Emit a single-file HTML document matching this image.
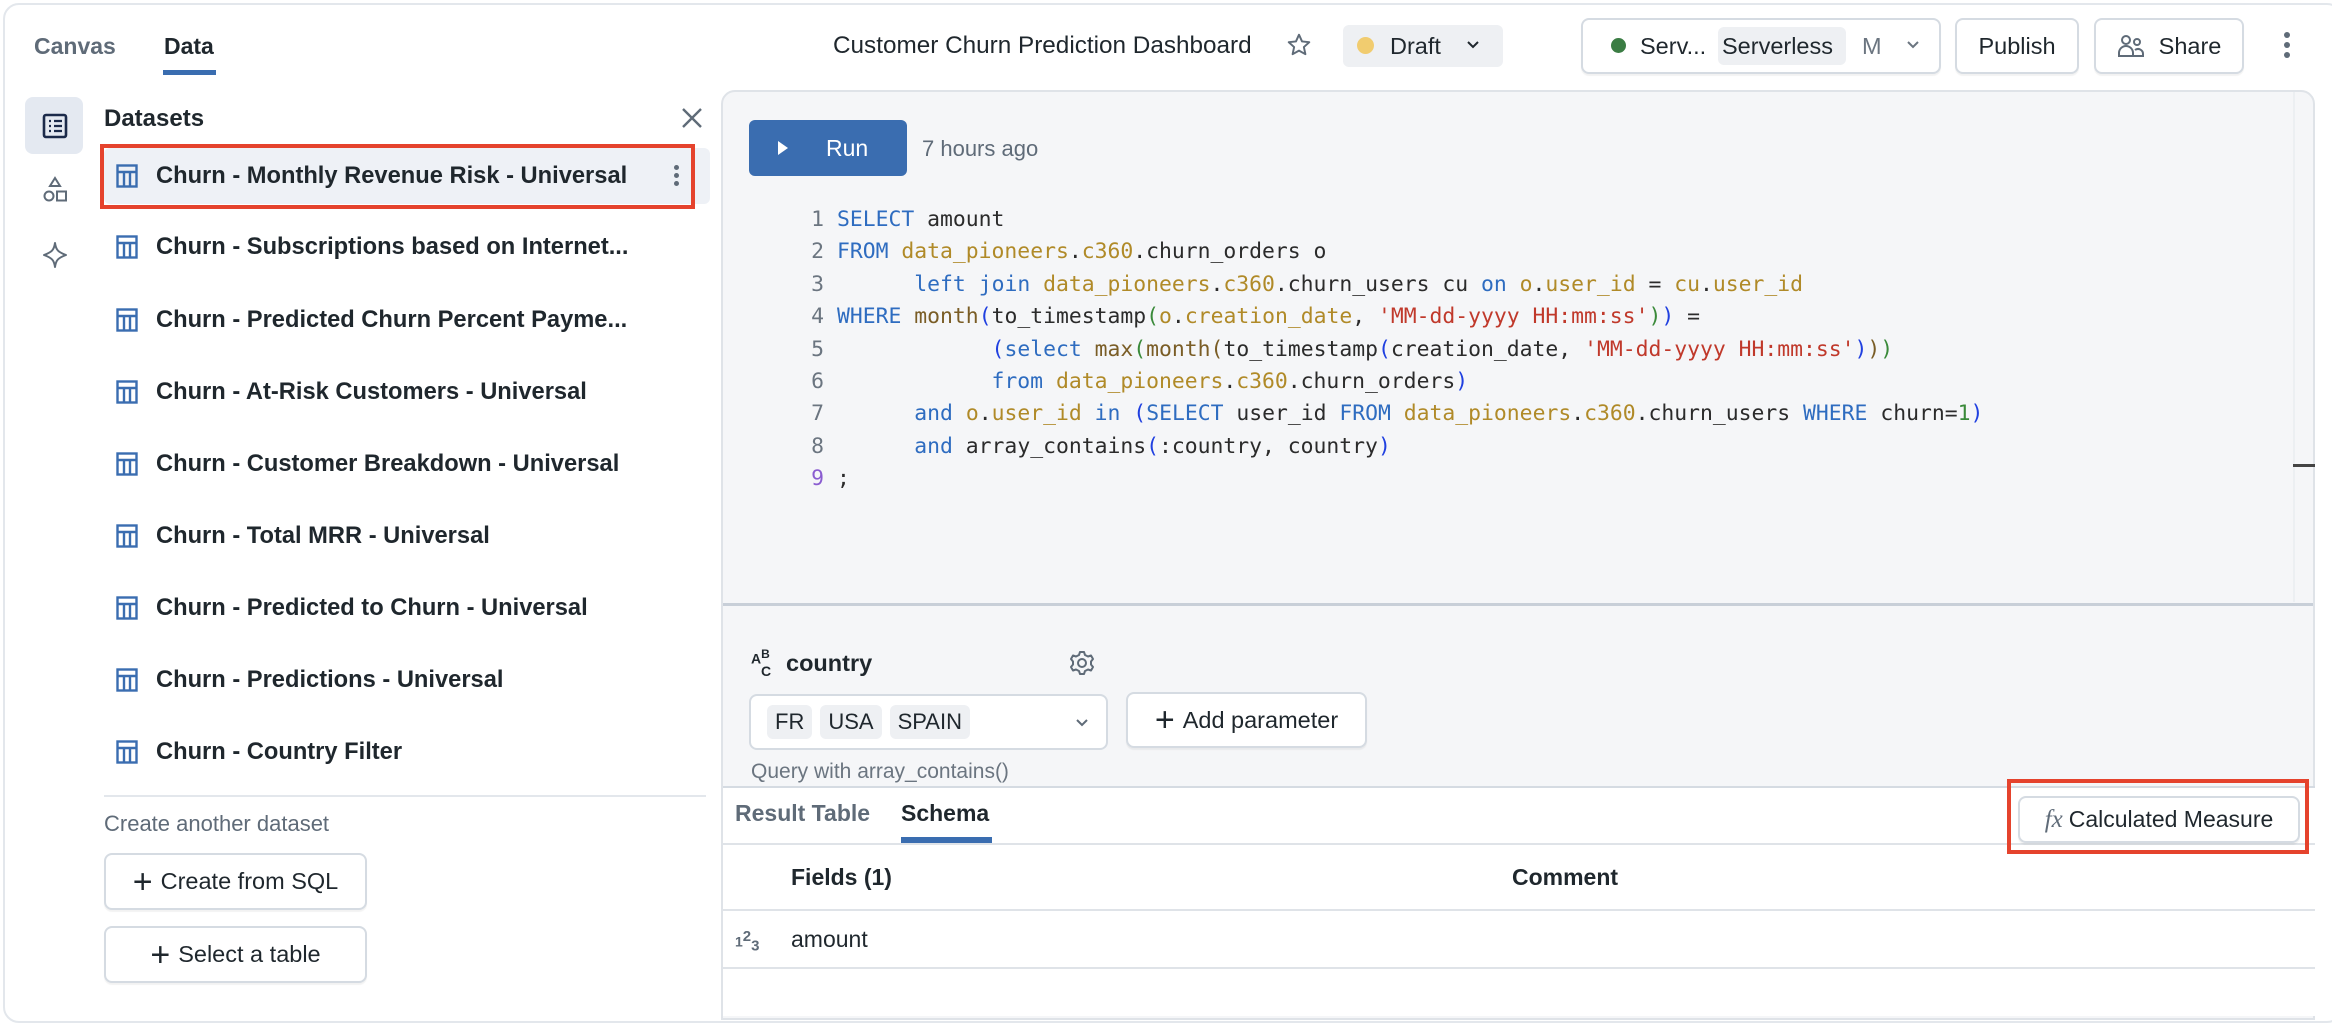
<!DOCTYPE html>
<html><head><meta charset="utf-8"><style>
*{box-sizing:border-box;margin:0;padding:0}
body{width:2332px;height:1010px;background:#fff;font-family:"Liberation Sans",sans-serif;color:#1f272d;position:relative;overflow:hidden}
.a{position:absolute}
.frame{left:3px;top:3px;width:2340px;height:1020px;border:2px solid #e3e7ec;border-radius:16px}
.btn{position:absolute;border:2px solid #d5dbe2;border-radius:8px;background:#fff;display:flex;align-items:center;justify-content:center;font-size:23.5px;color:#1f272d;box-shadow:0 2px 1px rgba(0,0,0,.05)}
.row{position:absolute;left:116px;height:56px;display:flex;align-items:center;font-size:23.7px;font-weight:bold;color:#1f272d;white-space:nowrap}
.row svg{margin-right:18px}
.code{position:absolute;left:800px;top:204px;font-family:"DejaVu Sans Mono","Liberation Mono",monospace;font-size:21.4px;line-height:32.4px;color:#2b2b2b;white-space:pre}
.ln{display:inline-block;width:24px;text-align:right;color:#6b7580;margin-right:13px}
.k{color:#2e6cc0}.i{color:#b08a28}.f{color:#7a5d26}.s{color:#c0392b}.n{color:#3a8a3a}.p{color:#2040e0}.pg{color:#3a8a3a}
.chip{background:#eef0f3;border-radius:6px;padding:4px 8px;margin-right:8px}
</style></head><body>
<div class="a frame"></div>
<!-- tabs -->
<div class="a" style="left:34px;top:33px;font-size:23px;font-weight:bold;color:#5f6b78">Canvas</div>
<div class="a" style="left:164px;top:33px;font-size:23px;font-weight:bold;color:#1f272d">Data</div>
<div class="a" style="left:163px;top:70px;width:53px;height:5px;background:#3a6db0"></div>
<!-- header -->
<div class="a" style="left:833px;top:32px;font-size:24.3px;color:#1f272d">Customer Churn Prediction Dashboard</div>
<svg class="a" style="left:1286px;top:32px" width="26" height="26" viewBox="0 0 24 24"><path d="M12 2.5l2.8 6.2 6.7.7-5 4.5 1.4 6.6L12 17.2 6.1 20.5l1.4-6.6-5-4.5 6.7-.7z" fill="none" stroke="#5f6b78" stroke-width="1.8" stroke-linejoin="round"/></svg>
<div class="a" style="left:1343px;top:25px;width:160px;height:42px;background:#eef0f3;border-radius:6px"></div>
<div class="a" style="left:1357px;top:37px;width:17px;height:17px;border-radius:50%;background:#f1cc6f"></div>
<div class="a" style="left:1390px;top:33px;font-size:23.5px">Draft</div>
<svg class="a" style="left:1466px;top:40px" width="14" height="10" viewBox="0 0 14 10"><path d="M2 2l5 5 5-5" fill="none" stroke="#1f272d" stroke-width="2"/></svg>
<div class="btn" style="left:1581px;top:18px;width:360px;height:56px;justify-content:flex-start"></div>
<div class="a" style="left:1611px;top:38px;width:15px;height:15px;border-radius:50%;background:#3b7d44"></div>
<div class="a" style="left:1640px;top:33px;font-size:23.5px">Serv...</div>
<div class="a" style="left:1718px;top:27px;width:128px;height:38px;background:#eef0f3;border-radius:6px"></div>
<div class="a" style="left:1722px;top:33px;font-size:23.5px">Serverless</div>
<div class="a" style="left:1862px;top:33px;font-size:23.5px;color:#6b7580">M</div>
<svg class="a" style="left:1906px;top:40px" width="14" height="10" viewBox="0 0 14 10"><path d="M2 2l5 5 5-5" fill="none" stroke="#6b7580" stroke-width="2"/></svg>
<div class="btn" style="left:1955px;top:18px;width:124px;height:56px">Publish</div>
<div class="btn" style="left:2094px;top:18px;width:150px;height:56px"><svg width="28" height="26" viewBox="0 0 28 26" style="margin-right:14px"><circle cx="9" cy="7" r="4" fill="none" stroke="#5f6b78" stroke-width="2"/><circle cx="20" cy="9" r="3" fill="none" stroke="#5f6b78" stroke-width="2"/><path d="M2 23v-3a7 7 0 0 1 14 0v3zM16 23h10v-2a5 5 0 0 0-8-4" fill="none" stroke="#5f6b78" stroke-width="2"/></svg>Share</div>
<div class="a" style="left:2284px;top:32px;width:6px;height:6px;border-radius:50%;background:#5f6b78;box-shadow:0 10px 0 #5f6b78,0 20px 0 #5f6b78"></div>
<!-- left rail -->
<div class="a" style="left:25px;top:97px;width:58px;height:57px;background:#e4e9f1;border-radius:8px"></div>
<svg class="a" style="left:41px;top:112px" width="28" height="28" viewBox="0 0 28 28"><rect x="3" y="3" width="22" height="22" rx="2" fill="none" stroke="#1b2a4a" stroke-width="2.6"/><path d="M8 9h2M13 9h8M8 14h2M13 14h8M8 19h2M13 19h8" stroke="#1b2a4a" stroke-width="2.2"/></svg>
<svg class="a" style="left:40px;top:175px" width="30" height="30" viewBox="0 0 30 30"><path d="M15 3l5 8H10z" fill="none" stroke="#5f6b78" stroke-width="2"/><circle cx="9" cy="21" r="4.5" fill="none" stroke="#5f6b78" stroke-width="2"/><rect x="17" y="16.5" width="9" height="9" fill="none" stroke="#5f6b78" stroke-width="2"/></svg>
<svg class="a" style="left:40px;top:240px" width="30" height="30" viewBox="0 0 30 30"><path d="M15 3c1 7 3 9 11 12-8 3-10 5-11 12-1-7-3-9-11-12 8-3 10-5 11-12z" fill="none" stroke="#5f6b78" stroke-width="2" stroke-linejoin="round"/></svg>
<!-- datasets -->
<div class="a" style="left:104px;top:105px;font-size:24px;font-weight:bold">Datasets</div>
<svg class="a" style="left:680px;top:106px" width="24" height="24" viewBox="0 0 24 24"><path d="M3 3l18 18M21 3L3 21" stroke="#5f6b78" stroke-width="2.4"/></svg>
<div class="a" style="left:104px;top:148px;width:606px;height:56px;background:#eef1f6;border-radius:6px"></div>
<div class="a" style="left:100px;top:144px;width:595px;height:65px;border:4px solid #e5432d"></div>
<div class="a" style="left:674px;top:165px;width:5px;height:5px;border-radius:50%;background:#5f6b78;box-shadow:0 8px 0 #5f6b78,0 16px 0 #5f6b78"></div>
<div class="row" style="top:148px"><svg width="22" height="24" viewBox="0 0 22 24"><rect x="1.5" y="1.5" width="19" height="21" fill="none" stroke="#3a6db0" stroke-width="2.4"/><path d="M1.5 8h19M8 8v14.5M14 8v14.5" stroke="#3a6db0" stroke-width="2.4"/></svg>Churn - Monthly Revenue Risk - Universal</div>
<div class="row" style="top:219px"><svg width="22" height="24" viewBox="0 0 22 24"><rect x="1.5" y="1.5" width="19" height="21" fill="none" stroke="#3a6db0" stroke-width="2.4"/><path d="M1.5 8h19M8 8v14.5M14 8v14.5" stroke="#3a6db0" stroke-width="2.4"/></svg>Churn - Subscriptions based on Internet...</div>
<div class="row" style="top:292px"><svg width="22" height="24" viewBox="0 0 22 24"><rect x="1.5" y="1.5" width="19" height="21" fill="none" stroke="#3a6db0" stroke-width="2.4"/><path d="M1.5 8h19M8 8v14.5M14 8v14.5" stroke="#3a6db0" stroke-width="2.4"/></svg>Churn - Predicted Churn Percent Payme...</div>
<div class="row" style="top:364px"><svg width="22" height="24" viewBox="0 0 22 24"><rect x="1.5" y="1.5" width="19" height="21" fill="none" stroke="#3a6db0" stroke-width="2.4"/><path d="M1.5 8h19M8 8v14.5M14 8v14.5" stroke="#3a6db0" stroke-width="2.4"/></svg>Churn - At-Risk Customers - Universal</div>
<div class="row" style="top:436px"><svg width="22" height="24" viewBox="0 0 22 24"><rect x="1.5" y="1.5" width="19" height="21" fill="none" stroke="#3a6db0" stroke-width="2.4"/><path d="M1.5 8h19M8 8v14.5M14 8v14.5" stroke="#3a6db0" stroke-width="2.4"/></svg>Churn - Customer Breakdown - Universal</div>
<div class="row" style="top:508px"><svg width="22" height="24" viewBox="0 0 22 24"><rect x="1.5" y="1.5" width="19" height="21" fill="none" stroke="#3a6db0" stroke-width="2.4"/><path d="M1.5 8h19M8 8v14.5M14 8v14.5" stroke="#3a6db0" stroke-width="2.4"/></svg>Churn - Total MRR - Universal</div>
<div class="row" style="top:580px"><svg width="22" height="24" viewBox="0 0 22 24"><rect x="1.5" y="1.5" width="19" height="21" fill="none" stroke="#3a6db0" stroke-width="2.4"/><path d="M1.5 8h19M8 8v14.5M14 8v14.5" stroke="#3a6db0" stroke-width="2.4"/></svg>Churn - Predicted to Churn - Universal</div>
<div class="row" style="top:652px"><svg width="22" height="24" viewBox="0 0 22 24"><rect x="1.5" y="1.5" width="19" height="21" fill="none" stroke="#3a6db0" stroke-width="2.4"/><path d="M1.5 8h19M8 8v14.5M14 8v14.5" stroke="#3a6db0" stroke-width="2.4"/></svg>Churn - Predictions - Universal</div>
<div class="row" style="top:724px"><svg width="22" height="24" viewBox="0 0 22 24"><rect x="1.5" y="1.5" width="19" height="21" fill="none" stroke="#3a6db0" stroke-width="2.4"/><path d="M1.5 8h19M8 8v14.5M14 8v14.5" stroke="#3a6db0" stroke-width="2.4"/></svg>Churn - Country Filter</div>
<div class="a" style="left:104px;top:795px;width:602px;height:2px;background:#e3e7ec"></div>
<div class="a" style="left:104px;top:811px;font-size:22px;color:#5f6b78">Create another dataset</div>
<div class="btn" style="left:104px;top:853px;width:263px;height:57px"><span style="font-size:34px;font-weight:300;margin-right:8px;color:#1f272d;line-height:1">+</span>Create from SQL</div>
<div class="btn" style="left:104px;top:926px;width:263px;height:57px"><span style="font-size:34px;font-weight:300;margin-right:8px;color:#1f272d;line-height:1">+</span>Select a table</div>
<!-- main panel -->
<div class="a" style="left:721px;top:90px;width:1594px;height:930px;background:#f5f6f8;border:2px solid #dfe3e8;border-radius:14px 14px 0 0"></div>
<div class="a" style="left:723px;top:603px;width:1590px;height:3px;background:#c8cfd8"></div>
<div class="a" style="left:2293px;top:92px;width:2px;height:510px;background:#eceff2"></div>
<div class="a" style="left:2293px;top:464px;width:22px;height:3px;background:#444"></div>
<div class="a" style="left:749px;top:120px;width:158px;height:56px;background:#3a6db0;border-radius:6px"></div>
<svg class="a" style="left:776px;top:139px" width="14" height="18" viewBox="0 0 14 18"><path d="M2 2l10 7-10 7z" fill="#fff"/></svg>
<div class="a" style="left:826px;top:135px;font-size:23px;color:#fff">Run</div>
<div class="a" style="left:922px;top:136px;font-size:22px;color:#5f6b78">7 hours ago</div>
<div class="code"><span class="ln">1</span><span class="k">SELECT</span> amount
<span class="ln">2</span><span class="k">FROM</span> <span class="i">data_pioneers</span>.<span class="i">c360</span>.churn_orders o
<span class="ln">3</span>      <span class="k">left</span> <span class="k">join</span> <span class="i">data_pioneers</span>.<span class="i">c360</span>.churn_users cu <span class="k">on</span> <span class="i">o</span>.<span class="i">user_id</span> = <span class="i">cu</span>.<span class="i">user_id</span>
<span class="ln">4</span><span class="k">WHERE</span> <span class="f">month</span><span class="p">(</span>to_timestamp<span class="pg">(</span><span class="i">o</span>.<span class="i">creation_date</span>, <span class="s">'MM-dd-yyyy HH:mm:ss'</span><span class="pg">)</span><span class="p">)</span> =
<span class="ln">5</span>            <span class="p">(</span><span class="k">select</span> <span class="f">max</span><span class="pg">(</span><span class="f">month</span><span class="f">(</span>to_timestamp<span class="p">(</span>creation_date, <span class="s">'MM-dd-yyyy HH:mm:ss'</span><span class="p">)</span><span class="f">)</span><span class="pg">)</span>
<span class="ln">6</span>            <span class="k">from</span> <span class="i">data_pioneers</span>.<span class="i">c360</span>.churn_orders<span class="p">)</span>
<span class="ln">7</span>      <span class="k">and</span> <span class="i">o</span>.<span class="i">user_id</span> <span class="k">in</span> <span class="p">(</span><span class="k">SELECT</span> user_id <span class="k">FROM</span> <span class="i">data_pioneers</span>.<span class="i">c360</span>.churn_users <span class="k">WHERE</span> churn=<span class="n">1</span><span class="p">)</span>
<span class="ln">8</span>      <span class="k">and</span> array_contains<span class="p">(</span>:country, country<span class="p">)</span>
<span class="ln" style="color:#8a5cd0">9</span>;</div>
<!-- parameter -->
<div class="a" style="left:751px;top:648px;font-size:14px;font-weight:bold;line-height:12px">A<sup style="font-size:12px">B</sup><br><span style="margin-left:10px">C</span></div>
<div class="a" style="left:786px;top:650px;font-size:23.5px;font-weight:bold">country</div>
<svg class="a" style="left:1068px;top:649px" width="28" height="28" viewBox="0 0 28 28"><circle cx="14" cy="14" r="4" fill="none" stroke="#5f6b78" stroke-width="2"/><path d="M12 3h4l1 3 3 1.5 3-1 2 3.5-2 2.5v3l2 2.5-2 3.5-3-1-3 1.5-1 3h-4l-1-3-3-1.5-3 1-2-3.5 2-2.5v-3l-2-2.5 2-3.5 3 1 3-1.5z" fill="none" stroke="#5f6b78" stroke-width="2" stroke-linejoin="round"/></svg>
<div class="a" style="left:749px;top:694px;width:359px;height:56px;background:#fff;border:2px solid #d5dbe2;border-radius:8px;display:flex;align-items:center;padding-left:16px;font-size:22px"><span class="chip">FR</span><span class="chip">USA</span><span class="chip">SPAIN</span></div>
<svg class="a" style="left:1075px;top:718px" width="14" height="10" viewBox="0 0 14 10"><path d="M2 2l5 5 5-5" fill="none" stroke="#5f6b78" stroke-width="2"/></svg>
<div class="btn" style="left:1126px;top:692px;width:241px;height:56px"><span style="font-size:34px;font-weight:300;margin-right:8px;line-height:1">+</span>Add parameter</div>
<div class="a" style="left:751px;top:760px;font-size:21px;color:#6b7580">Query with array_contains()</div>
<!-- results -->
<div class="a" style="left:723px;top:786px;width:1592px;height:230px;background:#fff;border-top:2px solid #d5dbe2"></div>
<div class="a" style="left:735px;top:800px;font-size:23px;font-weight:bold;color:#5f6b78">Result Table</div>
<div class="a" style="left:901px;top:800px;font-size:23px;font-weight:bold;color:#1f272d">Schema</div>
<div class="a" style="left:901px;top:837px;width:91px;height:6px;background:#3a6db0"></div>
<div class="a" style="left:723px;top:843px;width:1592px;height:2px;background:#dfe3e8"></div>
<div class="btn" style="left:2018px;top:796px;width:282px;height:47px;font-size:23px"><i style="font-family:'Liberation Serif',serif;font-size:25px;margin-right:6px;color:#5f6b78">fx</i>Calculated Measure</div>
<div class="a" style="left:2007px;top:779px;width:302px;height:75px;border:4px solid #e5432d"></div>
<div class="a" style="left:791px;top:864px;font-size:23px;font-weight:bold">Fields (1)</div>
<div class="a" style="left:1512px;top:864px;font-size:23px;font-weight:bold">Comment</div>
<div class="a" style="left:723px;top:909px;width:1592px;height:2px;background:#dfe3e8"></div>
<div class="a" style="left:735px;top:928px;font-size:14px;color:#5f6b78;font-weight:bold">1<sup style="font-size:15px">2</sup><sub style="font-size:15px">3</sub></div>
<div class="a" style="left:791px;top:926px;font-size:23px">amount</div>
<div class="a" style="left:723px;top:967px;width:1592px;height:2px;background:#dfe3e8"></div>
</body></html>
